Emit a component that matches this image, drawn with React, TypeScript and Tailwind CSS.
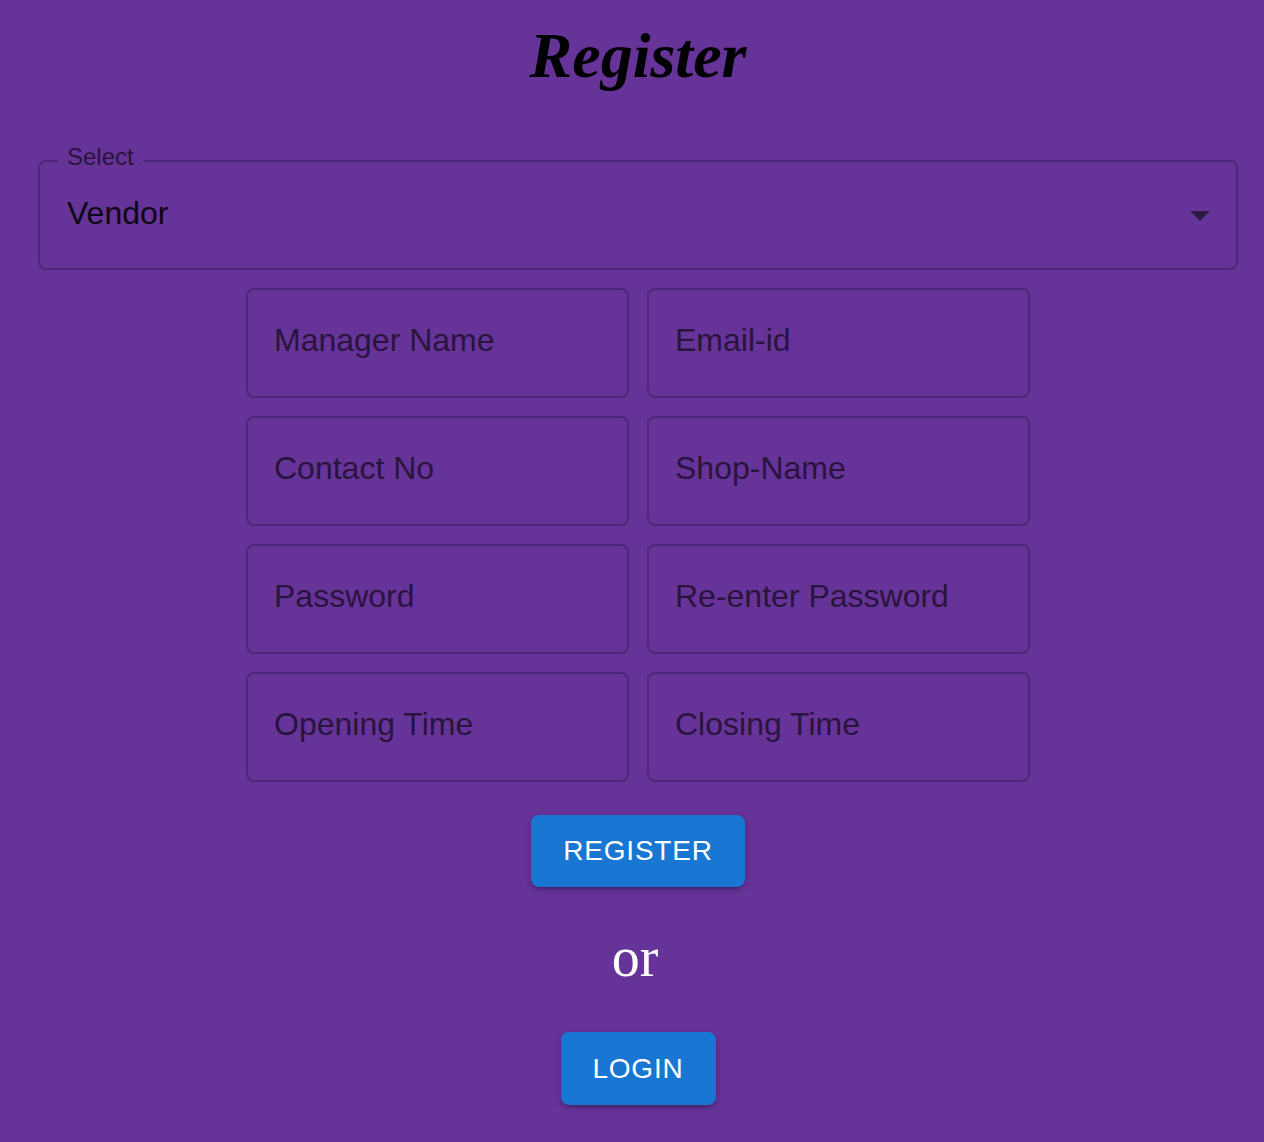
import React, { useState } from 'react';

const fields = [
  'Manager Name',
  'Email-id',
  'Contact No',
  'Shop-Name',
  'Password',
  'Re-enter Password',
  'Opening Time',
  'Closing Time',
];

const App: React.FC = () => {
  const [role] = useState('Vendor');

  return (
    <div className="min-h-[1142px] bg-[#663399] font-['Liberation_Sans',Arial,sans-serif]">
      <div className="ml-[38px] w-[1200px] flex flex-col items-center">
        <h1 className="pt-[24px] text-[64px] leading-[64px] font-bold italic text-black font-['Liberation_Serif','Times_New_Roman',serif]">
          Register
        </h1>

        {/* role select */}
        <div className="relative mt-[72px] w-full h-[110px] rounded-lg border-2 border-[#4f2776] flex items-center justify-between pl-[27px] pr-[26px]">
          <span className="absolute -top-[19px] left-[18px] bg-[#663399] px-[9px] text-[24px] leading-[28px] text-[#29143d]">
            Select
          </span>
          <span className="pb-[4px] text-[32px] text-[#0d0714]">{role}</span>
          <svg width="20" height="10" viewBox="0 0 20 10" className="mt-[2px]">
            <path d="M0 0 L20 0 L10 10 Z" fill="#2f1746" />
          </svg>
        </div>

        {/* fields */}
        <div className="mt-[18px] grid w-[784px] grid-cols-2 gap-[18px]">
          {fields.map((f) => (
            <div
              key={f}
              className="h-[110px] rounded-lg border-2 border-[#4f2776] flex items-center pl-[26px] pb-[6px] text-[32px] text-[#29143d]"
            >
              {f}
            </div>
          ))}
        </div>

        <button className="mt-[33px] w-[214px] h-[72px] rounded-lg bg-[#1976d2] text-white text-[28px] tracking-[0.8px] uppercase shadow-[0_3px_3px_-2px_rgba(0,0,0,0.2),0_3px_4px_0_rgba(0,0,0,0.14),0_1px_8px_0_rgba(0,0,0,0.12)]">
          Register
        </button>

        <p className="mt-[38px] text-[56px] leading-[64px] text-white font-['Liberation_Serif','Times_New_Roman',serif] -ml-[6px]">
          or
        </p>

        <button className="mt-[43px] w-[155px] h-[73px] rounded-lg bg-[#1976d2] text-white text-[28px] tracking-[0.8px] uppercase shadow-[0_3px_3px_-2px_rgba(0,0,0,0.2),0_3px_4px_0_rgba(0,0,0,0.14),0_1px_8px_0_rgba(0,0,0,0.12)]">
          Login
        </button>
      </div>
    </div>
  );
};

export default App;
